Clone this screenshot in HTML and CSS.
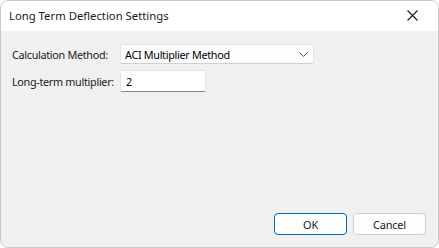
FILE: index.html
```html
<!DOCTYPE html>
<html lang="en">
  <head>
    <meta charset="UTF-8" />
    <title>Long Term Deflection Settings</title>
    <link rel="stylesheet" href="styles.css">
  </head>
  <body>
    <div class="window">
      <!-- Titel-linje -->
      <header class="titlebar">
        <span class="title">Long Term Deflection Settings</span>
        <button class="close" aria-label="Close">
          <svg width="11" height="11" viewBox="0 0 11 11">
            <path d="M0.5 0.5 L10.5 10.5 M10.5 0.5 L0.5 10.5" stroke="#1a1a1a" stroke-width="1.1" fill="none" />
          </svg>
        </button>
      </header>

      <main class="content">
        <div class="row">
          <label class="label">Calculation Method:</label>
          <div class="combo">
            <span>ACI Multiplier Method</span>
            <svg width="9" height="5" viewBox="0 0 9 5">
              <path d="M0.5 0.5 L4.5 4.5 L8.5 0.5" stroke="#555" stroke-width="1" fill="none" />
            </svg>
          </div>
        </div>
        <div class="row">
          <label class="label">Long-term multiplier:</label>
          <div class="textbox">2</div>
        </div>

        <!-- Knapper -->
        <div class="buttons">
          <button class="btn default">OK</button>
          <button class="btn">Cancel</button>
        </div>
      </main>
    </div>
  </body>
</html>
```

FILE: styles.css
```css
* {
  margin: 0;
  padding: 0;
  box-sizing: border-box;
}

body {
  font-family: 'Noto Sans', sans-serif;
  font-size: 10.8px;
  letter-spacing: -0.3px;
  color: #000;
  background-color: #fff;
}

.window {
  width: 439px;
  height: 248px;
  border: 1px solid #c9c9c9;
  border-radius: 8px;
  overflow: hidden;
  display: flex;
  flex-direction: column;
  background-color: #f0f0f0;
}

/* Titel */
.titlebar {
  height: 30px;
  background-color: #fff;
  display: flex;
  align-items: center;
  justify-content: space-between;
  padding-left: 8px;
  flex-shrink: 0;
}
.title {
  font-size: 11.3px;
  letter-spacing: 0;
  color: #1a1a1a;
  margin-top: -1px;
}
.close {
  width: 46px;
  height: 30px;
  border: none;
  background-color: transparent;
  display: flex;
  align-items: center;
  justify-content: center;
  padding-right: 5px;
  padding-bottom: 1px;
}

.content {
  flex: 1;
  display: flex;
  flex-direction: column;
  padding: 13px 12px 12px 11px;
  gap: 6px;
}

.row {
  display: flex;
  align-items: center;
}
.label {
  width: 108px;
  flex-shrink: 0;
  white-space: nowrap;
  color: #1a1a1a;
}

.combo {
  width: 194px;
  height: 20px;
  background-color: #fdfdfd;
  border: 1px solid #e3e3e3;
  border-bottom-color: #cfcfcf;
  border-radius: 2px;
  display: flex;
  align-items: center;
  justify-content: space-between;
  padding: 0 5px 0 4px;
}

.textbox {
  width: 86px;
  height: 22px;
  background-color: #fff;
  border: 1px solid #e3e3e3;
  border-bottom: 1px solid #868686;
  border-radius: 2px;
  padding-left: 5px;
  display: flex;
  align-items: center;
}

.buttons {
  margin-top: auto;
  display: flex;
  justify-content: flex-end;
  gap: 6px;
}
.btn {
  width: 73px;
  height: 22px;
  font-family: 'Noto Sans', sans-serif;
  font-size: 11px;
  letter-spacing: -0.2px;
  color: #1a1a1a;
  background-color: #fdfdfd;
  border: 1px solid #d0d0d0;
  border-radius: 4px;
}
.default {
  border: 1px solid #0067c0;
}
```
